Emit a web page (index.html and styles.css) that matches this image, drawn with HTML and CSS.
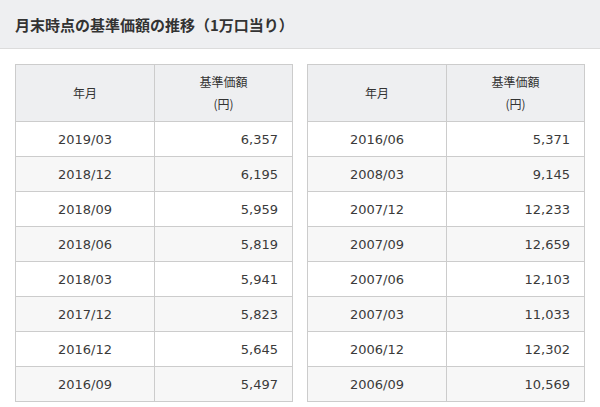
FILE: index.html
```html
<!DOCTYPE html>
<html lang="ja">
<head>
<meta charset="utf-8">
<link rel="stylesheet" href="styles.css">
</head>
<body>
<div class="title-bar"><h2 class="title">月末時点の基準価額の推移（1万口当り）</h2></div>
<div class="tables">
  <table class="nav-table">
    <thead><tr><th class="c-date">年月</th><th class="c-val">基準価額<br>(円)</th></tr></thead>
    <tbody>
      <tr><td class="d">2019/03</td><td class="v">6,357</td></tr>
      <tr><td class="d">2018/12</td><td class="v">6,195</td></tr>
      <tr><td class="d">2018/09</td><td class="v">5,959</td></tr>
      <tr><td class="d">2018/06</td><td class="v">5,819</td></tr>
      <tr><td class="d">2018/03</td><td class="v">5,941</td></tr>
      <tr><td class="d">2017/12</td><td class="v">5,823</td></tr>
      <tr><td class="d">2016/12</td><td class="v">5,645</td></tr>
      <tr><td class="d">2016/09</td><td class="v">5,497</td></tr>
    </tbody>
  </table>
  <table class="nav-table">
    <thead><tr><th class="c-date">年月</th><th class="c-val">基準価額<br>(円)</th></tr></thead>
    <tbody>
      <tr><td class="d">2016/06</td><td class="v">5,371</td></tr>
      <tr><td class="d">2008/03</td><td class="v">9,145</td></tr>
      <tr><td class="d">2007/12</td><td class="v">12,233</td></tr>
      <tr><td class="d">2007/09</td><td class="v">12,659</td></tr>
      <tr><td class="d">2007/06</td><td class="v">12,103</td></tr>
      <tr><td class="d">2007/03</td><td class="v">11,033</td></tr>
      <tr><td class="d">2006/12</td><td class="v">12,302</td></tr>
      <tr><td class="d">2006/09</td><td class="v">10,569</td></tr>
    </tbody>
  </table>
</div>
</body>
</html>
```
FILE: styles.css
```css
html, body {
  margin: 0;
  padding: 0;
  background: #fff;
  color: #333;
  font-family: "DejaVu Sans", "Noto Sans CJK JP", sans-serif;
}
.title-bar {
  height: 48px;
  background: #eeeff1;
  border-bottom: 1px solid #dcdcdc;
  display: flex;
  align-items: center;
  padding: 0 15px;
}
.title {
  margin: 0;
  font-family: "Noto Sans CJK JP", sans-serif;
  font-size: 15px;
  font-weight: bold;
  color: #333;
}
.tables {
  display: flex;
  gap: 14px;
  padding: 15px 15px 0;
}
.nav-table {
  width: 278px;
  border-collapse: collapse;
  table-layout: fixed;
}
.nav-table th,
.nav-table td {
  border: 1px solid #cccccc;
  padding: 0;
}
.nav-table th {
  height: 56px;
  background: #eeeff1;
  font-family: "Noto Sans CJK JP", sans-serif;
  font-weight: normal;
  font-size: 12px;
  line-height: 22px;
  color: #333;
  text-align: center;
}
.c-date { width: 138px; }
.nav-table td {
  height: 34px;
  font-size: 13px;
  color: #3a3a3a;
}
.nav-table tbody tr:nth-child(even) td {
  background: #f7f7f7;
}
.d { text-align: center; }
.v { text-align: right; padding-right: 14px !important; }
```
